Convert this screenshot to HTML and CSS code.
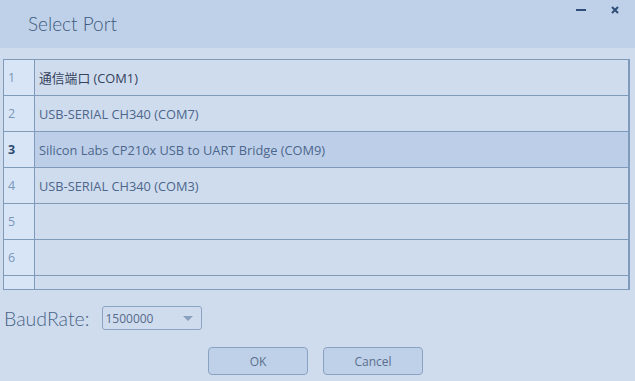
FILE: index.html
```html
<!DOCTYPE html>
<html lang="en">
<head>
	<meta charset="utf-8">
	<title>Select Port</title>
	<link rel="stylesheet" href="styles.css">
</head>
<body>
	<header class="titlebar">
		<h1 class="title">Select Port</h1>
		<div class="controls">
			<span class="min"></span>
			<svg class="close" width="8" height="8" viewBox="0 0 8 8"><path d="M1 1L7 7M7 1L1 7" stroke="#2f4f78" stroke-width="2"/></svg>
		</div>
	</header>
	<div class="grid">
		<div class="row"><div class="num">1</div><div class="cell cjk">通信端口 (COM1)</div></div>
		<div class="row"><div class="num">2</div><div class="cell">USB-SERIAL CH340 (COM7)</div></div>
		<div class="row selected"><div class="num">3</div><div class="cell">Silicon Labs CP210x USB to UART Bridge (COM9)</div></div>
		<div class="row"><div class="num">4</div><div class="cell">USB-SERIAL CH340 (COM3)</div></div>
		<div class="row"><div class="num">5</div><div class="cell"></div></div>
		<div class="row"><div class="num">6</div><div class="cell"></div></div>
		<div class="row"><div class="num"></div><div class="cell"></div></div>
	</div>
	<div class="baud">
		<label class="baud-label">BaudRate:</label>
		<div class="combo"><span>1500000</span><span class="arrow"></span></div>
	</div>
	<div class="buttons">
		<button class="btn">OK</button>
		<button class="btn">Cancel</button>
	</div>
</body>
</html>
```
FILE: styles.css
```css
body {
	margin: 0;
	width: 635px;
	height: 381px;
	overflow: hidden;
	background: #cfdcee;
	font-family: "Open Sans", "Noto Sans CJK SC", sans-serif;
	color: #4c668c;
}
.titlebar {
	height: 48px;
	background: #bfd1e8;
	display: flex;
	justify-content: space-between;
	align-items: flex-start;
}
.title {
	margin: 12px 0 0 28px;
	font-family: Lato, sans-serif;
	font-size: 19px;
	font-weight: 300;
	color: #3d5a80;
}
.controls {
	display: flex;
	align-items: center;
	gap: 25px;
	margin: 6px 16px 0 0;
	height: 8px;
}
.min {
	width: 10px;
	height: 2px;
	background: #2f4f78;
}
.close {
	display: block;
}
.grid {
	margin: 11px 5px 0 3px;
	height: 229px;
	border: 1px solid #7f9aba;
	border-right: 2px solid #7f9aba;
	overflow: hidden;
}
.row {
	display: flex;
	height: 35px;
	border-bottom: 1px solid #7f9aba;
}
.num {
	width: 26px;
	padding-left: 4px;
	border-right: 1px solid #7f9aba;
	background: #d7e5f6;
	font-size: 12.5px;
	color: #7a96ba;
	display: flex;
	align-items: center;
}
.cell {
	flex: 1;
	padding-left: 4px;
	font-size: 12.8px;
	display: flex;
	align-items: center;
}
.cjk {
	color: #34425a;
}
.selected .cell {
	background: #bdcfe8;
}
.selected .num {
	color: #2d4a72;
	font-weight: bold;
}
.baud {
	display: flex;
	align-items: center;
	margin-top: 16px;
	padding-left: 4px;
	gap: 13px;
}
.baud-label {
	font-family: Lato, sans-serif;
	font-size: 19.5px;
	font-weight: 300;
	color: #4a6486;
}
.combo {
	display: flex;
	align-items: center;
	justify-content: space-between;
	padding: 0 8px 0 2px;
	box-sizing: border-box;
	width: 100px;
	height: 24px;
	border: 1px solid #8ba3c2;
	border-radius: 3px;
	font-size: 12px;
	color: #566a8a;
}
.arrow {
	width: 0;
	height: 0;
	border-left: 5px solid transparent;
	border-right: 5px solid transparent;
	border-top: 5px solid #8aa0bd;
}
.buttons {
	display: flex;
	justify-content: center;
	gap: 15px;
	margin-top: 17px;
	padding-right: 4px;
}
.btn {
	width: 100px;
	height: 28px;
	border: 1px solid #8aa2c2;
	border-radius: 4px;
	background: #bfd1e8;
	font-family: "Open Sans", sans-serif;
	font-size: 12px;
	color: #5a6f8e;
}
```
